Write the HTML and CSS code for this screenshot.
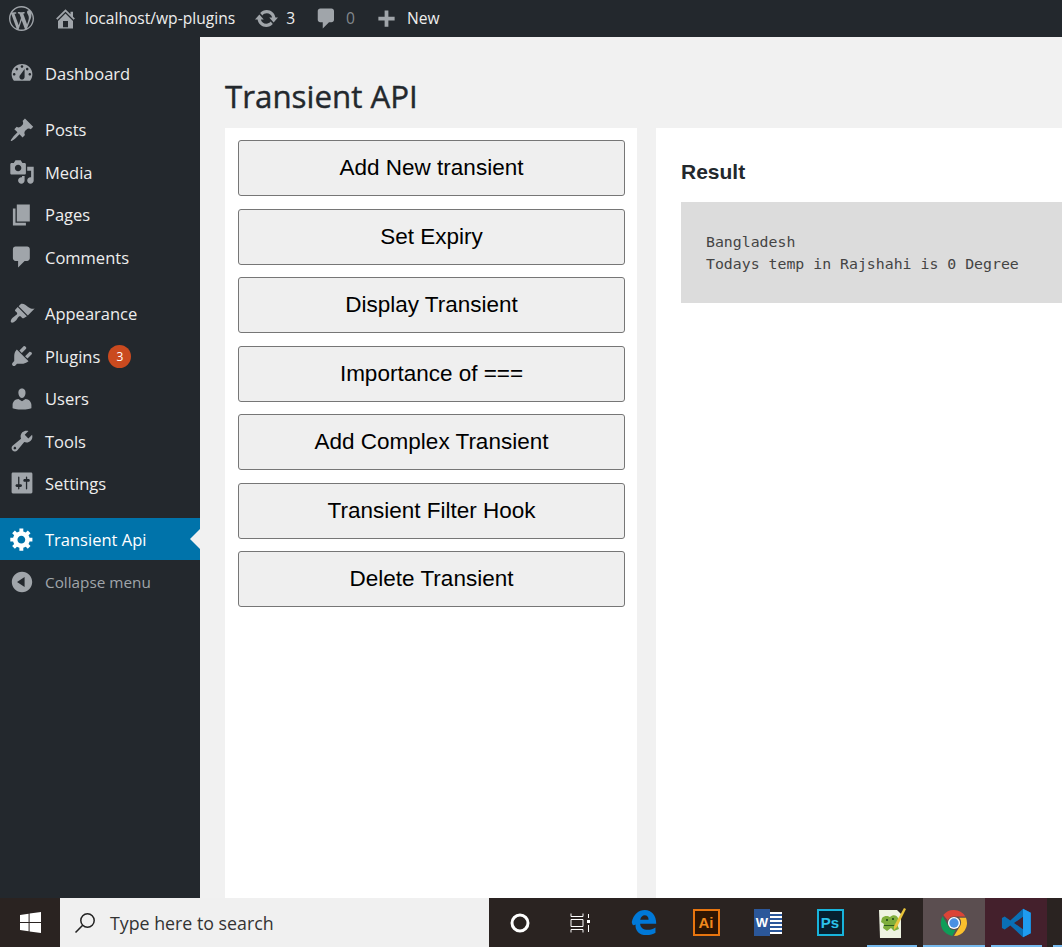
FILE: index.html
```html
<!DOCTYPE html>
<html lang="en">
<head>
    <meta charset="UTF-8">
    <title>Transient API</title>
    <link rel="stylesheet" href="styles.css">
</head>
<body>
<div class="screen">
    <header class="adminbar">
        <svg class="bar-logo" viewBox="0 0 20 20"><path d="M20 10c0-5.51-4.49-10-10-10C4.48 0 0 4.49 0 10c0 5.52 4.48 10 10 10 5.51 0 10-4.48 10-10zM7.78 15.37L4.37 6.22c.55-.02 1.17-.08 1.17-.08.5-.06.44-1.13-.06-1.11 0 0-1.45.11-2.37.11-.18 0-.37 0-.58-.01C4.12 2.69 6.87 1.11 10 1.11c2.33 0 4.45.87 6.05 2.34-.68-.11-1.65.39-1.65 1.58 0 .74.45 1.36.9 2.1.35.61.55 1.36.55 2.46 0 1.49-1.4 5-1.4 5l-3.03-8.37c.54-.02.82-.17.82-.17.5-.05.44-1.25-.06-1.22 0 0-1.44.12-2.38.12-.87 0-2.33-.12-2.33-.12-.5-.03-.56 1.2-.06 1.22l.92.08 1.26 3.41zM17.41 10c.24-.64.74-1.87.43-4.25.7 1.29 1.05 2.71 1.05 4.25 0 3.29-1.73 6.24-4.4 7.78.97-2.59 1.94-5.2 2.92-7.78zM6.1 18.09C3.12 16.65 1.11 13.53 1.11 10c0-1.3.23-2.48.72-3.59C3.25 10.3 4.67 14.2 6.1 18.09zm4.03-6.63l2.58 6.98c-.86.29-1.76.45-2.71.45-.79 0-1.57-.11-2.29-.33.81-2.38 1.62-4.74 2.42-7.1z"/></svg>
        <div class="bar-item bar-home">
            <svg viewBox="0 0 20 20"><path d="M16 8.5l1.53 1.53-1.06 1.06L10 4.62l-6.47 6.47-1.06-1.06L10 2.5l4 4v-2h2v4zm-6-2.46l6 5.99V18H4v-5.97zM12 17v-5H8v5h4z"/></svg>
            <span>localhost/wp-plugins</span>
        </div>
        <div class="bar-item bar-updates">
            <svg viewBox="0 0 20 20"><path d="M10.2 3.28c3.53 0 6.43 2.61 6.92 6h2.08l-3.5 4-3.5-4h2.32c-.45-1.97-2.21-3.45-4.32-3.45-1.45 0-2.73.71-3.54 1.78L4.95 5.66C6.23 4.2 8.11 3.28 10.2 3.28zm-.4 13.44c-3.52 0-6.43-2.61-6.92-6H.8l3.5-4c1.17 1.33 2.33 2.67 3.5 4H5.48c.45 1.97 2.21 3.45 4.32 3.45 1.45 0 2.73-.71 3.54-1.78l1.71 1.95c-1.28 1.46-3.15 2.38-5.25 2.38z"/></svg>
            <span>3</span>
        </div>
        <div class="bar-item bar-comments">
            <svg viewBox="0 0 20 20"><path d="M5 2h9c1.1 0 2 .9 2 2v7c0 1.1-.9 2-2 2h-2l-5 5v-5H5c-1.1 0-2-.9-2-2V4c0-1.1.9-2 2-2z"/></svg>
            <span class="muted">0</span>
        </div>
        <div class="bar-item bar-new">
            <svg viewBox="0.5 -1.5 20 20"><path d="M17 7v3h-5v5H9v-5H4V7h5V2h3v5h5z"/></svg>
            <span>New</span>
        </div>
    </header>

    <div class="middle">
        <nav class="sidemenu">
            <div class="menu-group">
                <a class="menu-item"><svg viewBox="0 0 20 20"><path fill-rule="evenodd" d="M3.76 16h12.48c1.1-1.37 1.76-3.11 1.76-5 0-4.42-3.58-8-8-8s-8 3.58-8 8c0 1.89.66 3.63 1.76 5zM10 4c.55 0 1 .45 1 1s-.45 1-1 1-1-.45-1-1 .45-1 1-1zM6 6c.55 0 1 .45 1 1s-.45 1-1 1-1-.45-1-1 .45-1 1-1zm8 0c.55 0 1 .45 1 1s-.45 1-1 1-1-.45-1-1 .45-1 1-1zm-5.37 5.55L12 7v6c0 1.1-.9 2-2 2s-2-.9-2-2c0-.57.24-1.08.63-1.45zM4 10c.55 0 1 .45 1 1s-.45 1-1 1-1-.45-1-1 .45-1 1-1zm12 0c.55 0 1 .45 1 1s-.45 1-1 1-1-.45-1-1 .45-1 1-1z"/></svg><span>Dashboard</span></a>
            </div>
            <div class="menu-group">
                <a class="menu-item"><svg viewBox="0 0 20 20"><path d="M10.44 3.02l1.82-1.82 6.36 6.35-1.83 1.82c-1.05-.68-2.48-.57-3.41.36l-.75.75c-.92.93-1.04 2.35-.35 3.41l-1.83 1.82-2.41-2.41-2.8 2.79c-.42.42-3.38 2.71-3.8 2.29s1.86-3.39 2.28-3.81l2.79-2.79L4.1 9.36l1.83-1.82c1.05.69 2.48.57 3.4-.36l.75-.75c.93-.92 1.05-2.35.36-3.41z"/></svg><span>Posts</span></a>
                <a class="menu-item"><svg viewBox="0 0 20 20"><path fill-rule="evenodd" d="M13 11V4c0-.55-.45-1-1-1h-1.67L9 1H5L3.67 3H2c-.55 0-1 .45-1 1v7c0 .55.45 1 1 1h10c.55 0 1-.45 1-1zM7 4.5c1.38 0 2.5 1.12 2.5 2.5S8.38 9.5 7 9.5 4.5 8.38 4.5 7 5.62 4.5 7 4.5zM14 6h5v10.5c0 1.38-1.12 2.5-2.5 2.5S14 17.88 14 16.5s1.12-2.5 2.5-2.5c.17 0 .34.02.5.05V9h-3V6zm-4 8.05V13h2v3.5c0 1.38-1.12 2.5-2.5 2.5S7 17.88 7 16.5 8.12 14 9.5 14c.17 0 .34.02.5.05z"/></svg><span>Media</span></a>
                <a class="menu-item"><svg viewBox="0 0 20 20"><path d="M6 15V2h10v13H6zm-1 1h8v2H3V5h2v11z"/></svg><span>Pages</span></a>
                <a class="menu-item"><svg viewBox="0 0 20 20"><path d="M5 2h9c1.1 0 2 .9 2 2v7c0 1.1-.9 2-2 2h-2l-5 5v-5H5c-1.1 0-2-.9-2-2V4c0-1.1.9-2 2-2z"/></svg><span>Comments</span></a>
            </div>
            <div class="menu-group group-last">
                <a class="menu-item"><svg viewBox="0 0 20 20"><path d="M14.48 11.06L7.41 3.99l1.5-1.5c.5-.56 2.3-.47 3.51.32 1.21.8 1.43 1.28 2.91 2.1 1.18.64 2.45 1.26 4.45.85zm-.71.71L6.7 4.7 4.93 6.47c-.39.39-.39 1.02 0 1.41l1.06 1.06c.39.39.39 1.03 0 1.42-.6.6-1.43 1.11-2.21 1.69-.35.26-.7.53-1.01.84-1.34 1.34-1.78 2.91-1.17 3.52.61.6 2.18.16 3.52-1.18.31-.31.58-.66.84-1.01.58-.78 1.09-1.61 1.69-2.21.39-.39 1.03-.39 1.42 0l1.06 1.06c.39.39 1.02.39 1.41 0z"/></svg><span>Appearance</span></a>
                <a class="menu-item"><svg viewBox="0 0 20 20"><path d="M13.11 4.36L9.87 7.6 8 5.73l3.24-3.24c.35-.34 1.05-.2 1.56.32.52.51.66 1.21.31 1.55zm-8 1.77l.91-1.12 9.01 9.01-1.19.84c-.71.71-2.63 1.16-3.82 1.16H6.14L4.9 17.26c-.59.59-1.54.59-2.12 0-.59-.58-.59-1.53 0-2.12l1.24-1.24v-3.88c0-1.13.4-3.19 1.09-3.89zm7.26 3.97l3.24-3.24c.34-.35 1.04-.21 1.55.31.52.51.66 1.21.31 1.55l-3.24 3.25z"/></svg><span>Plugins</span><b class="badge">3</b></a>
                <a class="menu-item"><svg viewBox="0 0 20 20"><path d="M10 9.25c-2.27 0-2.73-3.44-2.73-3.44C7 4.02 7.82 2 9.97 2c2.16 0 2.98 2.02 2.71 3.81 0 0-.41 3.44-2.68 3.44zm0 2.57L12.72 10c2.39 0 4.52 2.33 4.52 4.53v2.49s-3.65 1.13-7.24 1.13c-3.65 0-7.24-1.13-7.24-1.13v-2.49c0-2.25 1.94-4.48 4.47-4.48z"/></svg><span>Users</span></a>
                <a class="menu-item"><svg viewBox="0 0 20 20"><path fill-rule="evenodd" d="M16.68 9.77c-1.34 1.34-3.3 1.67-4.95.99l-5.41 6.52c-.99.99-2.59.99-3.58 0s-.99-2.59 0-3.57l6.52-5.42c-.68-1.65-.35-3.61.99-4.95 1.28-1.28 3.12-1.62 4.72-1.06l-2.89 2.89 2.82 2.82 2.86-2.87c.53 1.58.18 3.39-1.08 4.65zM3.81 16.21c.4.39 1.04.39 1.43 0 .4-.4.4-1.04 0-1.43-.39-.4-1.03-.4-1.43 0-.39.39-.39 1.03 0 1.43z"/></svg><span>Tools</span></a>
                <a class="menu-item"><svg viewBox="0 0 20 20"><path fill-rule="evenodd" d="M18 17V3c0-.55-.45-1-1-1H3c-.55 0-1 .45-1 1v14c0 .55.45 1 1 1h14c.55 0 1-.45 1-1zM8 11h1c.55 0 1 .45 1 1s-.45 1-1 1H8v1.5c0 .28-.22.5-.5.5s-.5-.22-.5-.5V13H6c-.55 0-1-.45-1-1s.45-1 1-1h1V5.5c0-.28.22-.5.5-.5s.5.22.5.5V11zm5-2h-1c-.55 0-1-.45-1-1s.45-1 1-1h1V5.5c0-.28.22-.5.5-.5s.5.22.5.5V7h1c.55 0 1 .45 1 1s-.45 1-1 1h-1v5.5c0 .28-.22.5-.5.5s-.5-.22-.5-.5V9z"/></svg><span>Settings</span></a>
            </div>
            <a class="menu-item current"><svg viewBox="0 0 20 20"><path fill-rule="evenodd" d="M18 12h-2.18c-.17.7-.44 1.35-.81 1.93l1.54 1.54-2.1 2.1-1.54-1.54c-.58.36-1.23.63-1.91.79V19H8v-2.18c-.68-.16-1.33-.43-1.91-.79l-1.54 1.54-2.12-2.12 1.54-1.54c-.36-.58-.63-1.23-.79-1.91H1V9.03h2.17c.16-.7.44-1.35.8-1.94L2.43 5.55l2.1-2.1 1.54 1.54c.58-.37 1.24-.64 1.93-.81V2h3v2.18c.68.16 1.33.43 1.91.79l1.54-1.54 2.12 2.12-1.54 1.54c.36.59.64 1.24.8 1.94H18V12zm-8.5 1.5c1.66 0 3-1.34 3-3s-1.34-3-3-3-3 1.34-3 3 1.34 3 3 3z"/></svg><span>Transient Api</span></a>
            <a class="menu-item collapse"><svg viewBox="0 0 20 20"><path fill-rule="evenodd" d="M10 2.16c4.33 0 7.84 3.51 7.84 7.84s-3.51 7.84-7.84 7.84S2.16 14.33 2.16 10 5.71 2.16 10 2.16zm2 11.72V6.12L6.18 9.97z"/></svg><span>Collapse menu</span></a>
        </nav>

        <main class="content">
            <h1>Transient API</h1>
            <div class="columns">
                <section class="card buttons">
                    <button>Add New transient</button>
                    <button>Set Expiry</button>
                    <button>Display Transient</button>
                    <button>Importance of ===</button>
                    <button>Add Complex Transient</button>
                    <button>Transient Filter Hook</button>
                    <button>Delete Transient</button>
                </section>
                <section class="card result">
                    <h3>Result</h3>
                    <pre>Bangladesh
Todays temp in Rajshahi is 0 Degree</pre>
                </section>
            </div>
        </main>
    </div>

    <footer class="taskbar">
        <div class="start">
            <svg viewBox="0 0 21 21" width="21" height="21"><path fill="#fff" d="M0 3l8.6-1.2V10H0zM9.6 1.6L21 0v10H9.6zM0 11h8.6v8.2L0 18zM9.6 11H21v10L9.6 19.4z"/></svg>
        </div>
        <div class="searchbox">
            <svg viewBox="0 0 22 22" width="22" height="22"><circle cx="13.5" cy="8.5" r="6.7" fill="none" stroke="#222" stroke-width="1.5"/><path d="M8.7 13.3L1.5 20.5" stroke="#222" stroke-width="1.6"/></svg>
            <span>Type here to search</span>
        </div>
        <div class="tile">
            <svg viewBox="0 0 20 20" width="20" height="20"><circle cx="10" cy="10" r="8" fill="none" stroke="#fff" stroke-width="3"/></svg>
        </div>
        <div class="tile taskview">
            <svg viewBox="0 0 20 20" width="20" height="20"><path fill="none" stroke="#fff" d="M1 .5v3h12v-3M1 6.500h12v7H1zM1 19.500v-3h12v3"/><path fill="#fff" d="M17 7h3v3h-3zM18 1h1v4h-1zM18 12h1v7h-1z"/></svg>
        </div>
        <div class="tile">
            <svg viewBox="0 0 34 35" width="26" height="27"><path fill="#0078d7" fill-rule="evenodd" d="M1 17C3 7 10 1 18 1c9 0 15 7 15 18H12c0 5 4 8 10 8 4 0 7-1 10-3v7c-3 2-7 3-12 3-9 0-15-6-14-14-2 1-4 3-5-3zM12 14h11c0-4-2-6-5-6-3 0-5 2-6 6z"/></svg>
        </div>
        <div class="tile">
            <div class="app-box ai">Ai</div>
        </div>
        <div class="tile">
            <div class="word"><span class="word-w">W</span><span class="word-page"></span></div>
        </div>
        <div class="tile">
            <div class="app-box ps">Ps</div>
        </div>
        <div class="tile open">
            <svg viewBox="0 0 30 32" width="30" height="32"><path fill="#eef3e2" d="M2 3h18l4 4v24H3z"/><path fill="#7fae3c" d="M5 11c3-3 6-2 8-1 3-3 7-2 8 1 1 2 0 4-1 6l2 5-5 2-3-3-4 3-4-3 1-4-3-2z"/><path fill="#2e5a1c" d="M9 12h2v2H9zM15 11h2v2h-2zM7 18h12v1H7z"/><path fill="#e8c33a" d="M27 1l2 1-9 18-3 3 0-4z"/></svg>
        </div>
        <div class="tile chrome open">
            <svg viewBox="0 0 30 30" width="28" height="28"><path fill="#db4437" d="M15 1a14 14 0 0 1 12.100 7H15a7 7 0 0 0-6.500 4.400L3.500 6.500A14 14 0 0 1 15 1z"/><path fill="#fbc02d" d="M27.800 9.500A14 14 0 0 1 15 29l5.800-9.800A7 7 0 0 0 20.500 9.500z"/><path fill="#0f9d58" d="M2.800 7.800l6 10.200a7 7 0 0 0 8 4.300L13.200 28.800A14 14 0 0 1 2.800 7.800z"/><circle cx="15" cy="15" r="6.500" fill="#fff"/><circle cx="15" cy="15" r="5" fill="#4a90e2"/></svg>
        </div>
        <div class="tile vscode open">
            <svg viewBox="0 0 100 100" width="31" height="32"><path fill="#0a6fb5" fill-rule="evenodd" d="M96 17L71 4 30 42 12 29 3 34v32l9 5 18-13 41 38 25-13zM71 30L42 50l29 20z"/><path fill="#1f9cf0" d="M71 4l25 13v66L71 96z"/></svg>
        </div>
        <div class="tile-rest"></div>
    </footer>
</div>
</body>
</html>
```

FILE: styles.css
```css
* {
    box-sizing: border-box;
}
html, body {
    margin: 0;
    height: 100%;
    overflow: hidden;
}
body {
    font-family: "Open Sans", "Noto Sans", sans-serif;
    background: #f1f1f1;
}
.screen {
    height: 947px;
    display: flex;
    flex-direction: column;
}

/* top bar */
.adminbar {
    height: 37px;
    flex: none;
    display: flex;
    align-items: center;
    background: #23282d;
    color: #eee;
    font-size: 15.6px;
    padding-left: 9px;
}
.adminbar span {
    position: relative;
    top: -1px;
}
.adminbar svg {
    fill: #a0a5aa;
    width: 25px;
    height: 25px;
    flex: none;
}
.bar-item {
    display: flex;
    align-items: center;
    gap: 7px;
}
.bar-home {
    margin-left: 19px;
}
.bar-updates {
    margin-left: 19px;
}
.bar-comments {
    margin-left: 19px;
}
.bar-new {
    margin-left: 19px;
    gap: 8px;
}
.muted {
    color: #82878c;
}

/* left menu */
.middle {
    flex: 1;
    display: flex;
    min-height: 0;
}
.sidemenu {
    width: 200px;
    flex: none;
    background: #23282d;
    padding-top: 15px;
}
.menu-group {
    margin-bottom: 14.400px;
}
.group-last {
    margin-bottom: 13.200px;
}
.menu-item {
    position: relative;
    height: 42.400px;
    display: flex;
    align-items: center;
    padding-left: 9px;
    color: #eee;
    font-size: 16.500px;
}
.menu-item svg {
    width: 26px;
    height: 26px;
    flex: none;
    margin-right: 10px;
    fill: #a0a5aa;
}
.badge {
    width: 23px;
    height: 23px;
    border-radius: 50%;
    margin-left: 8px;
    background: #ca4a1f;
    color: #fff;
    font-size: 12px;
    font-weight: 400;
    display: flex;
    align-items: center;
    justify-content: center;
}
.current {
    background: #0073aa;
    color: #fff;
}
.current svg {
    fill: #fff;
}
.current::after {
    content: "";
    position: absolute;
    right: 0;
    top: 50%;
    margin-top: -10px;
    border: 10px solid transparent;
    border-left-width: 0;
    border-right-color: #f1f1f1;
}
.collapse {
    color: #a0a5aa;
    font-size: 15.300px;
    padding-top: 1px;
}

/* page body */
.content {
    flex: 1;
    min-width: 0;
    padding-left: 25px;
    display: flex;
    flex-direction: column;
}
h1 {
    margin: 38px 0 11px;
    height: 42px;
    line-height: 42px;
    font-size: 31.300px;
    font-weight: 400;
    -webkit-text-stroke: 0.4px #23282d;
    color: #23282d;
}
.columns {
    flex: 1;
    display: flex;
    gap: 19px;
}
.card {
    background: #fff;
}
.buttons {
    width: 412px;
    flex: none;
    padding: 12px 12px 0 13px;
    display: flex;
    flex-direction: column;
    gap: 12.500px;
}
button {
    height: 56px;
    flex: none;
    background: #efefef;
    border: 1px solid #767676;
    border-radius: 3px;
    color: #000;
    font-family: "Liberation Sans", Arial, sans-serif;
    font-size: 22.500px;
}
.result {
    flex: 1;
    padding-left: 25px;
}
h3 {
    margin: 32px 0 18px;
    height: 24px;
    line-height: 24px;
    font-family: "Liberation Sans", Arial, sans-serif;
    font-size: 21px;
    font-weight: 700;
    color: #23282d;
}
pre {
    margin: 0;
    height: 101px;
    padding: 29px 25px;
    background: #dcdcdc;
    color: #444;
    font-family: "DejaVu Sans Mono", "Liberation Mono", monospace;
    font-size: 14.850px;
    line-height: 22px;
}

/* windows taskbar */
.taskbar {
    height: 49px;
    flex: none;
    display: flex;
    background: #2a2321;
}
.start {
    width: 60px;
    flex: none;
    display: flex;
    align-items: center;
    justify-content: center;
}
.searchbox {
    width: 429px;
    flex: none;
    background: #f0f0f0;
    color: #333;
    display: flex;
    align-items: center;
    gap: 14px;
    padding-left: 14px;
    font-size: 17.800px;
}
.tile {
    width: 62px;
    flex: none;
    display: flex;
    align-items: center;
    justify-content: center;
}
.taskview {
    padding-right: 4px;
}
.open {
    background: linear-gradient(#76b9ed, #76b9ed) center bottom / 50px 2px no-repeat;
}
.chrome {
    background: #5b4e50;
    box-shadow: inset 0 -2px #76b9ed;
}
.vscode {
    background: linear-gradient(#76b9ed, #76b9ed) center bottom / 51px 2px no-repeat, #44202c;
}
.tile-rest {
    flex: 1;
    margin-left: 6px;
    box-shadow: inset 0 -2px #76b9ed;
}
.app-box {
    width: 27px;
    height: 27px;
    border: 2px solid;
    display: flex;
    align-items: center;
    justify-content: center;
    font-family: "Liberation Sans", Arial, sans-serif;
    font-size: 15px;
    font-weight: 700;
}
.ai {
    border-color: #e8750f;
    background: #2d1503;
    color: #f08a1d;
}
.ps {
    border-color: #18b4dc;
    background: #06202f;
    color: #2cc3ea;
}
.word {
    width: 28px;
    height: 30px;
    display: flex;
    align-items: center;
}
.word-w {
    width: 16px;
    height: 27px;
    background: #2b579a;
    color: #fff;
    font-family: "Liberation Sans", Arial, sans-serif;
    font-size: 13px;
    font-weight: 700;
    display: flex;
    align-items: center;
    justify-content: center;
}
.word-page {
    width: 12px;
    height: 22px;
    background: repeating-linear-gradient(#fff 0 2px, #2b579a 2px 4px);
}
```
